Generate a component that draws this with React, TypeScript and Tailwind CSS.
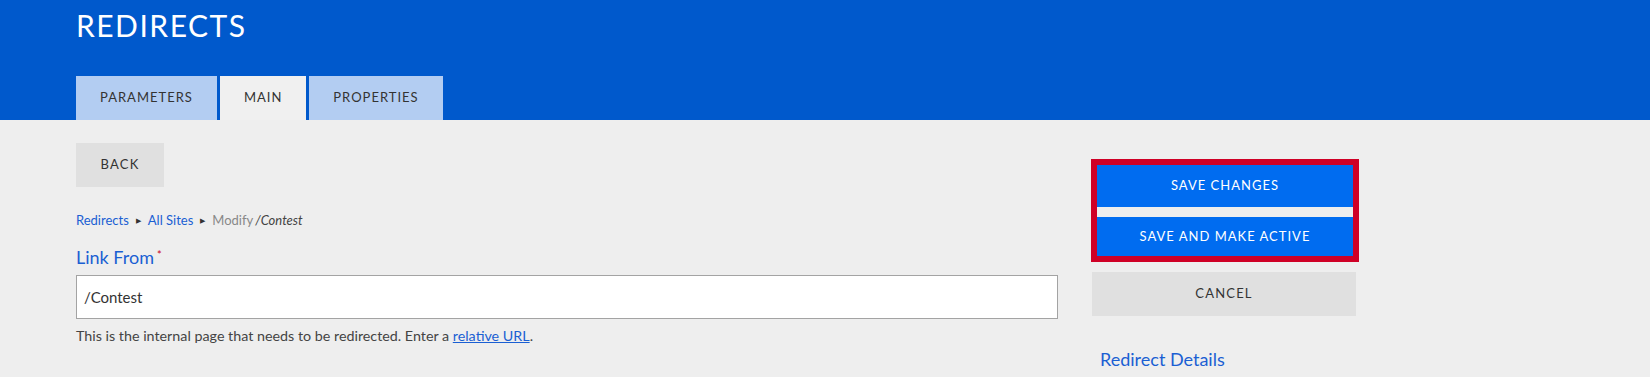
export default function App() {
    const tabs = [
        { label: "PARAMETERS", active: false },
        { label: "MAIN", active: true },
        { label: "PROPERTIES", active: false },
    ];

    return (
        <div className="min-h-screen bg-[#eeeeee] font-['Lato','Liberation_Sans',sans-serif] text-[#333333]">
            {/* Header */}
            <header className="h-[120px] bg-[#0059cc] px-[76px] flex flex-col justify-between">
                <h1 className="pt-[7px] text-[30px] leading-[36px] tracking-[1.5px] text-white">REDIRECTS</h1>
                <nav className="flex gap-[3px]">
                    {tabs.map((t) => (
                        <button
                            key={t.label}
                            type="button"
                            className={`h-[44px] px-6 text-[13px] tracking-[1px] text-[#333333] ${t.active ? "bg-[#f0f0f0]" : "bg-[#b3cdf2]"}`}
                        >
                            {t.label}
                        </button>
                    ))}
                </nav>
            </header>

            {/* Body */}
            <main className="flex gap-[33px] pl-[76px]">
                <div className="w-[982px] pt-[23px]">
                    <button type="button" className="h-[44px] w-[88px] bg-[#e0e0e0] text-[13px] tracking-[1.2px] text-[#333333]">
                        BACK
                    </button>

                    <div className="mt-[24px] flex items-center text-[13px] leading-[18px]">
                        <a className="text-[#1a5fd3]">Redirects</a>
                        <span className="mx-[7px] text-[7px] text-[#333333]">&#9654;</span>
                        <a className="text-[#1a5fd3]">All Sites</a>
                        <span className="mx-[7px] text-[7px] text-[#333333]">&#9654;</span>
                        <span className="mr-[2px] text-[#888888]">Modify</span>
                        <span className="italic text-[#444444]">/Contest</span>
                    </div>

                    <label className="mt-[16px] flex items-start text-[18px] leading-[24px] text-[#1a5fd3]">
                        Link From<span className="ml-[3px] mt-[4px] text-[11px] leading-[12px] text-[#cc0022]">*</span>
                    </label>
                    <input
                        className="mt-[6px] block h-[44px] w-full border border-[#a3a3a3] bg-white px-[7px] text-[15px] text-[#333333] outline-none"
                        defaultValue="/Contest"
                    />
                    <p className="mt-[7px] text-[14.3px] leading-[20px] text-[#444444]">
                        This is the internal page that needs to be redirected. Enter a{" "}
                        <a className="text-[#1a5fd3] underline">relative URL</a>.
                    </p>
                </div>

                <aside className="w-[268px] pt-[39px]">
                    <div className="flex flex-col gap-[10px] border-[6px] border-[#cf0026] bg-[#eeeeee]">
                        <button type="button" className="h-[42px] bg-[#006cf0] text-[13px] tracking-[1px] text-white">
                            SAVE CHANGES
                        </button>
                        <button type="button" className="h-[39px] bg-[#006cf0] text-[13px] tracking-[1px] text-white">
                            SAVE AND MAKE ACTIVE
                        </button>
                    </div>
                    <button type="button" className="ml-[1px] mt-[10px] h-[44px] w-[264px] bg-[#e0e0e0] text-[13px] tracking-[1.2px] text-[#333333]">
                        CANCEL
                    </button>
                    <h3 className="mt-[31px] pl-[9px] text-[18px] leading-[24px] text-[#1a5fd3]">Redirect Details</h3>
                </aside>
            </main>
        </div>
    );
}
